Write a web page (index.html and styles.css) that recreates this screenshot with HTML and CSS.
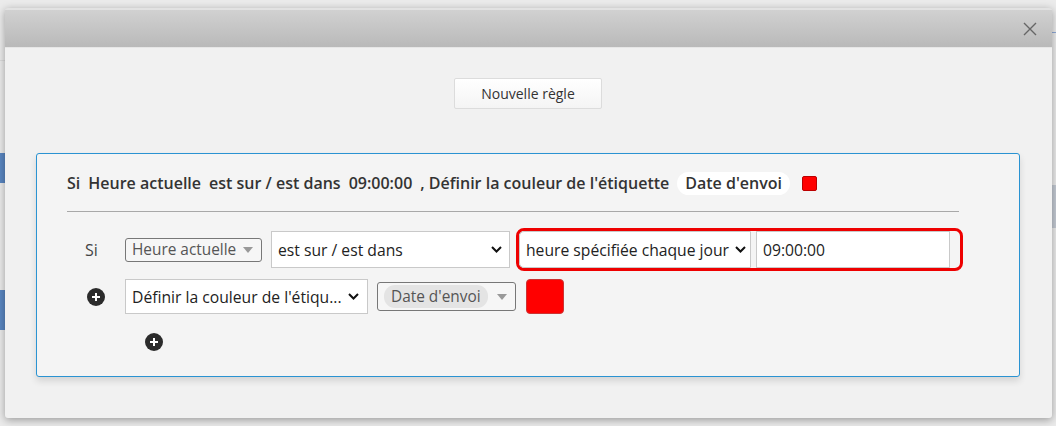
FILE: index.html
```html
<!DOCTYPE html>
<html lang="fr">
<head>
<meta charset="utf-8">
<title>Règles de couleur</title>
<link rel="stylesheet" href="styles.css">
</head>
<body>
<div class="dialog">
  <div class="dialog-head">
    <span class="close" title="Fermer">
      <svg width="14" height="14" viewBox="0 0 14 14"><path d="M1 1L13 13M13 1L1 13" stroke="#666" stroke-width="1.4" fill="none"/></svg>
    </span>
  </div>
  <div class="dialog-body">
    <button type="button" class="btn-new">Nouvelle règle</button>

    <div class="rule">
      <div class="summary">
        <span>Si</span>
        <span>Heure actuelle</span>
        <span>est sur / est dans</span>
        <span>09:00:00</span>
        <span>, Définir la couleur de l'étiquette</span>
        <span class="pill">Date d'envoi</span>
        <span class="swatch-mini"></span>
      </div>
      <hr class="sep">

      <div class="line">
        <div class="lead">Si</div>
        <div class="sel sel-small sel-field">Heure actuelle <span class="tri"></span></div>
        <div class="sel sel-op">est sur / est dans <svg class="chev" width="11" height="7" viewBox="0 0 11 7"><path d="M1 1l4.5 4.5L10 1" stroke="#111" stroke-width="2" fill="none"/></svg></div>
        <div class="hilite">
          <div class="sel sel-when">heure spécifiée chaque jour <svg class="chev" width="11" height="7" viewBox="0 0 11 7"><path d="M1 1l4.5 4.5L10 1" stroke="#111" stroke-width="2" fill="none"/></svg></div>
          <div class="time">09:00:00</div>
        </div>
      </div>

      <div class="line">
        <div class="lead"><span class="plus"></span></div>
        <div class="sel sel-action">Définir la couleur de l'étiqu... <svg class="chev" width="11" height="7" viewBox="0 0 11 7"><path d="M1 1l4.5 4.5L10 1" stroke="#111" stroke-width="2" fill="none"/></svg></div>
        <div class="sel sel-small sel-label"><span class="tag">Date d'envoi</span> <span class="tri"></span></div>
        <span class="swatch"></span>
      </div>

      <div class="line add">
        <span class="plus"></span>
      </div>
    </div>
  </div>
</div>
</body>
</html>
```

FILE: styles.css
```css
html, body {
  margin: 0;
  height: 100%;
}
body {
  font-family: "Open Sans", "Liberation Sans", sans-serif;
  color: #333;
  background:
    linear-gradient(#5a87c2, #5a87c2) 0 153px / 5px 30px no-repeat,
    linear-gradient(#5a87c2, #5a87c2) 0 290px / 5px 40px no-repeat,
    linear-gradient(#dcdcdc, #dcdcdc) 0 60px / 5px 1px no-repeat,
    linear-gradient(#c4cad3, #c4cad3) right 0 top 185px / 4px 43px no-repeat,
    linear-gradient(#555, #555) right 0 top 185px / 4px 1px no-repeat,
    linear-gradient(#555, #555) right 0 top 227px / 4px 1px no-repeat,
    linear-gradient(#8fa9d6, #8fa9d6) right 0 top 32px / 4px 1px no-repeat,
    #ebebeb;
  position: relative;
  overflow: hidden;
}

/* modal window sits over the page */
.dialog {
  position: absolute;
  left: 5px;
  top: 8px;
  width: 1047px;
  height: 410px;
  background: #f1f1f1;
  border-top: 2px solid #e2e2e2;
  border-radius: 3px;
  box-shadow: 0 2px 8px rgba(0, 0, 0, .35);
  display: flex;
  flex-direction: column;
  box-sizing: border-box;
}
.dialog-head {
  height: 37px;
  background: linear-gradient(#d1d1d1, #b9b9b9);
  border-bottom: 1px solid #e6e6e6;
  display: flex;
  justify-content: flex-end;
  align-items: center;
  padding-right: 13px;
}
.close {
  display: flex;
  padding: 2px;
}
.dialog-body {
  flex: 1;
  display: flex;
  flex-direction: column;
  align-items: center;
  padding: 30px 32px 41px 31px;
}
.btn-new {
  width: 148px;
  height: 31px;
  font: 14px "Open Sans", sans-serif;
  color: #333;
  background: linear-gradient(#fff, #f4f4f4);
  border: 1px solid #dcdcdc;
  border-radius: 2px;
  padding: 0;
}

.rule {
  align-self: stretch;
  margin-top: 44px;
  flex: 1;
  background: #f4f4f4;
  border: 1px solid #2a93d2;
  border-radius: 3px;
  box-shadow: 0 4px 7px rgba(0, 0, 0, .12);
  padding: 16px 60px 0 30px;
}
.summary {
  display: flex;
  align-items: center;
  gap: 8px;
  height: 26px;
  font-size: 16px;
  font-weight: 600;
}
.pill {
  background: #fff;
  border-radius: 12px;
  padding: 0 8px;
  line-height: 23px;
}
.swatch-mini {
  width: 15px;
  height: 15px;
  box-sizing: border-box;
  background: #f00;
  border: 1px solid #b00;
  border-radius: 2px;
  margin-left: 4px;
}
.sep {
  border: 0;
  border-top: 1px solid #a8a8a8;
  margin: 15px 0 16px;
}

.line {
  display: flex;
  align-items: center;
  gap: 9px;
  margin-bottom: 8px;
}
.line > * {
  flex-shrink: 0;
}
.lead {
  width: 49px;
  display: flex;
  justify-content: center;
  font-size: 16px;
  color: #444;
}
.lead .plus {
  margin-left: 9px;
}
.sel {
  box-sizing: border-box;
  display: flex;
  align-items: center;
  justify-content: space-between;
  font-size: 15.7px;
  color: #222;
  background: #fff;
  border: 1px solid #c9c9c9;
  padding: 0 8px 0 6px;
  white-space: nowrap;
}
.sel-small {
  font-size: 15.4px;
  background: #f6f6f6;
  border-color: #777;
  border-radius: 3px;
  color: #555;
  padding: 0 8px 0 6px;
}
.sel-field {
  width: 137px;
  height: 24px;
}
.sel-op {
  width: 239px;
  height: 37px;
  padding-right: 7px;
}
.tri {
  width: 0;
  height: 0;
  border-left: 5px solid transparent;
  border-right: 5px solid transparent;
  border-top: 6px solid #999;
}
.hilite {
  display: flex;
  gap: 5px;
  border: 3px solid #e00;
  border-radius: 8px;
  padding-right: 10px;
  margin-left: -3px;
}
.sel-when {
  width: 232px;
  height: 37px;
  border-radius: 5px 0 0 5px;
  padding-right: 4px;
}
.time {
  box-sizing: border-box;
  width: 194px;
  height: 37px;
  display: flex;
  align-items: center;
  padding-left: 6px;
  font-size: 15.7px;
  color: #222;
  background: #fff;
  border: 1px solid #c9c9c9;
}
.sel-action {
  width: 243px;
  height: 35px;
}
.sel-label {
  width: 139px;
  height: 29px;
  padding-left: 8px;
}
.tag {
  background: #e4e4e4;
  border-radius: 11px;
  padding: 1px 7px;
  margin-left: -2px;
}
.swatch {
  width: 38px;
  height: 35px;
  box-sizing: border-box;
  background: #f00;
  border: 1px solid #c33;
  border-radius: 4px;
  margin-left: 1px;
}
.plus {
  width: 18px;
  height: 18px;
  border-radius: 50%;
  background: #2b2b2b;
  position: relative;
  display: block;
}
.plus::before, .plus::after {
  content: "";
  position: absolute;
  left: 50%;
  top: 50%;
  background: #fff;
  transform: translate(-50%, -50%);
}
.plus::before { width: 8px; height: 2px; }
.plus::after { width: 2px; height: 8px; }
.add {
  padding-left: 78px;
  margin-top: 19px;
}
```
